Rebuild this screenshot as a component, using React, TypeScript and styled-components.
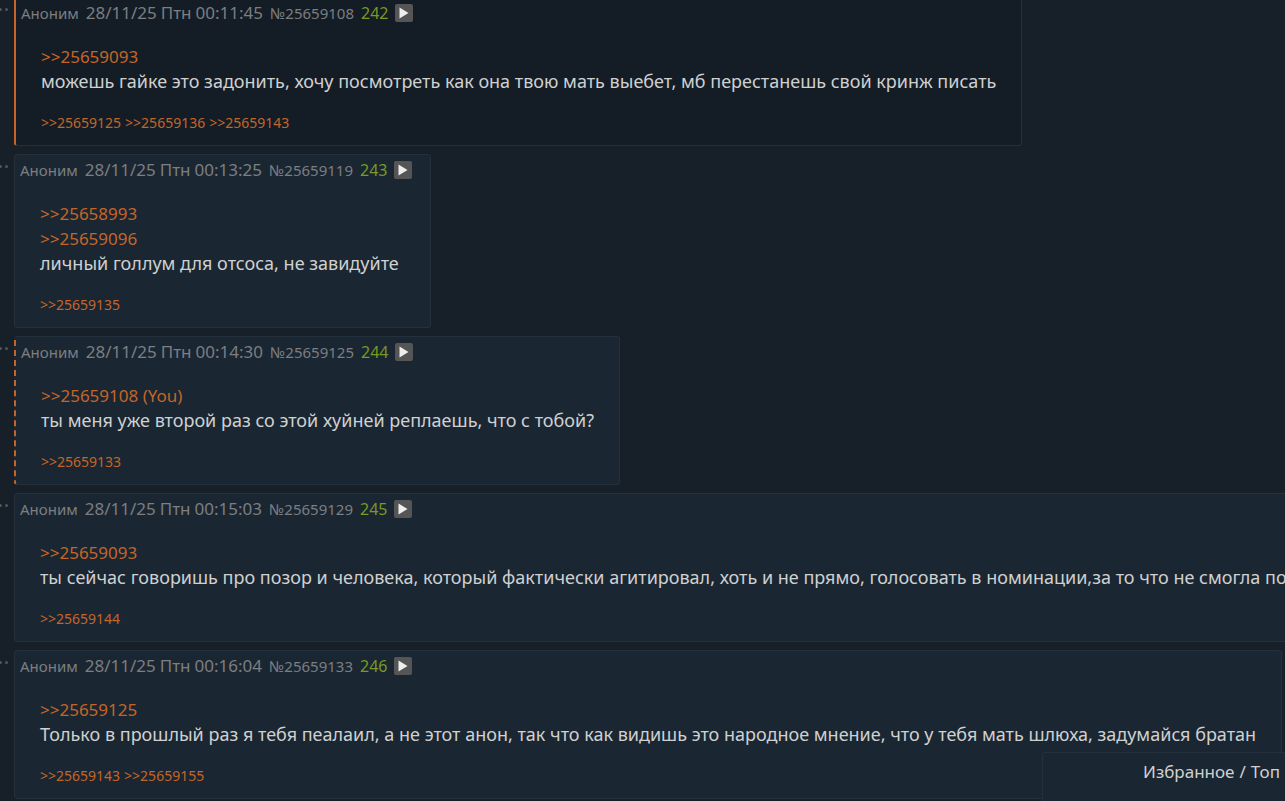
import React from "react";
import styled, { createGlobalStyle, css } from "styled-components";

type Mark = "none" | "own" | "reply";

interface PostData {
  id: string;
  ordinal: number;
  time: string;
  quotes: string[];
  text: string;
  backlinks: string[];
  mark: Mark;
}

const posts: PostData[] = [
  {
    id: "25659108",
    ordinal: 242,
    time: "00:11:45",
    quotes: ["25659093"],
    text: "можешь гайке это задонить, хочу посмотреть как она твою мать выебет, мб перестанешь свой кринж писать",
    backlinks: ["25659125", "25659136", "25659143"],
    mark: "own",
  },
  {
    id: "25659119",
    ordinal: 243,
    time: "00:13:25",
    quotes: ["25658993", "25659096"],
    text: "личный голлум для отсоса, не завидуйте",
    backlinks: ["25659135"],
    mark: "none",
  },
  {
    id: "25659125",
    ordinal: 244,
    time: "00:14:30",
    quotes: ["25659108 (You)"],
    text: "ты меня уже второй раз со этой хуйней реплаешь, что с тобой?",
    backlinks: ["25659133"],
    mark: "reply",
  },
  {
    id: "25659129",
    ordinal: 245,
    time: "00:15:03",
    quotes: ["25659093"],
    text: "ты сейчас говоришь про позор и человека, который фактически агитировал, хоть и не прямо, голосовать в номинации,за то что не смогла пос",
    backlinks: ["25659144"],
    mark: "none",
  },
  {
    id: "25659133",
    ordinal: 246,
    time: "00:16:04",
    quotes: ["25659125"],
    text: "Только в прошлый раз я тебя пеалаил, а не этот анон, так что как видишь это народное мнение, что у тебя мать шлюха, задумайся братан",
    backlinks: ["25659143", "25659155"],
    mark: "none",
  },
];

const GlobalStyle = createGlobalStyle`
  *, *::before, *::after { box-sizing: border-box; }
  body {
    margin: 0;
    background: #172029;
    color: #d0d0d0;
    font-family: "Trebuchet MS", "Noto Sans", sans-serif;
    font-size: 18px;
  }
  a { color: #c46527; text-decoration: none; }
  a:hover { color: #e08b52; }
`;

const Viewport = styled.div`
  height: 100vh;
  overflow: hidden;
`;

/* The thread is scrolled so that the first post's top edge is out of view. */
const Thread = styled.main`
  display: flex;
  flex-direction: column;
  gap: 8px;
  margin-top: -3px;
`;

const PostRow = styled.article`
  display: flex;
  align-items: flex-start;
`;

const MenuButton = styled.button`
  flex: none;
  display: flex;
  justify-content: flex-end;
  gap: 3px;
  width: 14px;
  padding: 11px 6px 11px 0;
  border: 0;
  background: none;
  cursor: pointer;
`;

const Dot = styled.span`
  flex: none;
  width: 3px;
  height: 3px;
  border-radius: 2px;
  background: #50565b;
`;

const Card = styled.div<{ $mark: Mark }>`
  flex: none;
  padding-bottom: 12px;
  border: 1px solid #24303b;
  border-radius: 3px;
  background: ${(p) => (p.$mark === "own" ? "#141d26" : "#1a2733")};
  ${(p) => p.$mark === "own" && css`border-left: 2px solid #c46527;`}
  ${(p) => p.$mark === "reply" && css`border-left: 2px dashed #c46527;`}
`;

const Header = styled.header`
  display: flex;
  align-items: baseline;
  gap: 7px;
  height: 30px;
  padding: 0 18px 0 5px;
  color: #7c7e80;
  font-size: 16px;
  line-height: 30px;
  white-space: nowrap;
`;

const Author = styled.span`
  font-size: 15px;
`;

const Stamp = styled.time`
  display: flex;
  gap: 4px;
  font-size: 17px;
`;

const NumberLink = styled.a`
  && {
    color: inherit;
    font-size: 15px;
  }
`;

const Ordinal = styled.span`
  color: #789922;
`;

const PlayButton = styled.button`
  align-self: center;
  display: flex;
  align-items: center;
  justify-content: center;
  width: 18px;
  height: 18px;
  padding: 0;
  border: 0;
  border-radius: 2px;
  background: #555555;
  cursor: pointer;
`;

const Body = styled.div`
  padding: 16px 25px 19px;
  line-height: 25px;
  white-space: nowrap;
`;

const Quote = styled.a`
  display: block;
  width: fit-content;
  font-size: 17px;
`;

const Message = styled.p`
  margin: 0;
`;

const Backlinks = styled.nav`
  display: flex;
  gap: 4px;
  padding: 0 25px;
  font-size: 14px;
  line-height: 20px;
`;

const Favorites = styled.aside`
  position: fixed;
  right: 0;
  bottom: 0;
  display: flex;
  justify-content: flex-end;
  gap: 5px;
  width: 243px;
  height: 49px;
  padding: 7px 5px 0;
  border: 1px solid #24303b;
  border-width: 1px 0 0 1px;
  border-radius: 3px 0 0 0;
  background: #1a2733;
  font-size: 17px;
  line-height: 24px;
`;

const PanelLink = styled.a`
  && { color: #d0d0d0; }
`;

function Post({ post }: { post: PostData }) {
  return (
    <PostRow id={post.id}>
      <MenuButton type="button" aria-label="Меню поста">
        <Dot />
        <Dot />
      </MenuButton>
      <Card $mark={post.mark}>
        <Header>
          <Author>Аноним</Author>
          <Stamp>
            <span>28/11/25</span>
            <span>Птн</span>
            <span>{post.time}</span>
          </Stamp>
          <NumberLink href={`#${post.id}`}>№{post.id}</NumberLink>
          <Ordinal>{post.ordinal}</Ordinal>
          <PlayButton type="button" aria-label="Ответить">
            <svg width="10" height="12" viewBox="0 0 10 12" aria-hidden="true">
              <path d="M0.5 0.5 L9.5 6 L0.5 11.5 Z" fill="#eeeeee" />
            </svg>
          </PlayButton>
        </Header>
        <Body>
          {post.quotes.map((q) => (
            <Quote key={q} href={`#${q.slice(0, 8)}`}>{`>>${q}`}</Quote>
          ))}
          <Message>{post.text}</Message>
        </Body>
        <Backlinks>
          {post.backlinks.map((b) => (
            <a key={b} href={`#${b}`}>{`>>${b}`}</a>
          ))}
        </Backlinks>
      </Card>
    </PostRow>
  );
}

export default function App() {
  return (
    <Viewport>
      <GlobalStyle />
      <Thread>
        {posts.map((p) => (
          <Post key={p.id} post={p} />
        ))}
      </Thread>
      <Favorites>
        <PanelLink href="#favorites">Избранное</PanelLink>
        <span>/</span>
        <PanelLink href="#top">Топ</PanelLink>
      </Favorites>
    </Viewport>
  );
}
